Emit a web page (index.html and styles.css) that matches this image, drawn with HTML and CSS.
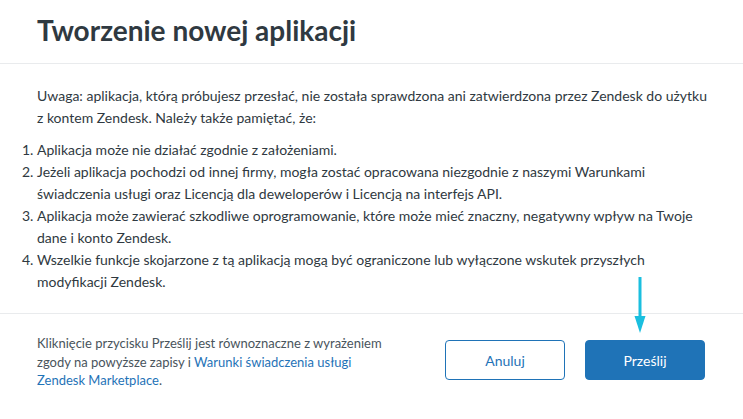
FILE: index.html
```html
<!DOCTYPE html>
<html lang="pl">
<head>
<meta charset="utf-8">
<title>Tworzenie nowej aplikacji</title>
<link rel="stylesheet" href="styles.css">
</head>
<body>
<div class="modal">
  <header class="modal-header">
    <h1 class="title">Tworzenie nowej aplikacji</h1>
  </header>
  <section class="modal-body">
    <p class="intro">Uwaga: aplikacja, którą próbujesz przesłać, nie została sprawdzona ani zatwierdzona przez Zendesk do użytku z kontem Zendesk. Należy także pamiętać, że:</p>
    <ol class="risks">
      <li>Aplikacja może nie działać zgodnie z założeniami.</li>
      <li>Jeżeli aplikacja pochodzi od innej firmy, mogła zostać opracowana niezgodnie z naszymi Warunkami świadczenia usługi oraz Licencją dla deweloperów i Licencją na interfejs API.</li>
      <li>Aplikacja może zawierać szkodliwe oprogramowanie, które może mieć znaczny, negatywny wpływ na Twoje dane i konto Zendesk.</li>
      <li>Wszelkie funkcje skojarzone z tą aplikacją mogą być ograniczone lub wyłączone wskutek przyszłych modyfikacji Zendesk.</li>
    </ol>
  </section>
  <footer class="modal-footer">
    <p class="consent">Kliknięcie przycisku Prześlij jest równoznaczne z wyrażeniem zgody na powyższe zapisy i <a class="link" href="#">Warunki świadczenia usługi Zendesk Marketplace</a>.</p>
    <div class="actions">
      <button class="btn btn-secondary" type="button">Anuluj</button>
      <button class="btn btn-primary" type="button">Prześlij</button>
    </div>
  </footer>
  <svg class="arrow" width="14" height="58" viewBox="0 0 14 58" aria-hidden="true">
    <line x1="7" y1="0" x2="7" y2="42" stroke="#1bbfdf" stroke-width="3"/>
    <polygon points="1.5,39 12.5,39 7,56" fill="#1bbfdf"/>
  </svg>
</div>
</body>
</html>
```

FILE: styles.css
```css
* { box-sizing: border-box; }

html, body {
  margin: 0;
  padding: 0;
  background: #ffffff;
}

body {
  font-family: "Lato", "Liberation Sans", sans-serif;
  color: #2f3941;
}

.modal {
  position: relative;
  width: 743px;
}

.modal-header {
  height: 64px;
  padding: 0 37px;
  display: flex;
  align-items: center;
  border-bottom: 1px solid #e9ebed;
}

.title {
  margin: 0;
  font-size: 28px;
  font-weight: 700;
  line-height: 36px;
  color: #2f3941;
  padding-bottom: 3px;
}

.modal-body {
  padding: 21px 32px 20px 0;
  border-bottom: 1px solid #e9ebed;
  font-size: 14px;
  line-height: 22px;
}

.intro {
  margin: 0 0 10px 37px;
}

.risks {
  margin: 0;
  padding-left: 37px;
}

.modal-footer {
  display: flex;
  align-items: flex-start;
  justify-content: space-between;
  padding: 18px 38px 30px 37px;
}

.consent {
  margin: 2px 0 0;
  width: 360px;
  font-size: 13px;
  line-height: 18.5px;
  color: #49545c;
}

.link {
  color: #1f73b7;
  text-decoration: none;
}

.actions {
  display: flex;
  gap: 20px;
  padding-top: 8px;
}

.btn {
  width: 120px;
  height: 40px;
  border-radius: 4px;
  font-family: "Lato", "Liberation Sans", sans-serif;
  font-size: 14px;
  cursor: pointer;
}

.btn-secondary {
  background: #ffffff;
  border: 1px solid #1f73b7;
  color: #1f73b7;
}

.btn-primary {
  background: #1f73b7;
  border: 1px solid #1f73b7;
  color: #ffffff;
}

.arrow {
  position: absolute;
  left: 633px;
  top: 277px;
}
```
